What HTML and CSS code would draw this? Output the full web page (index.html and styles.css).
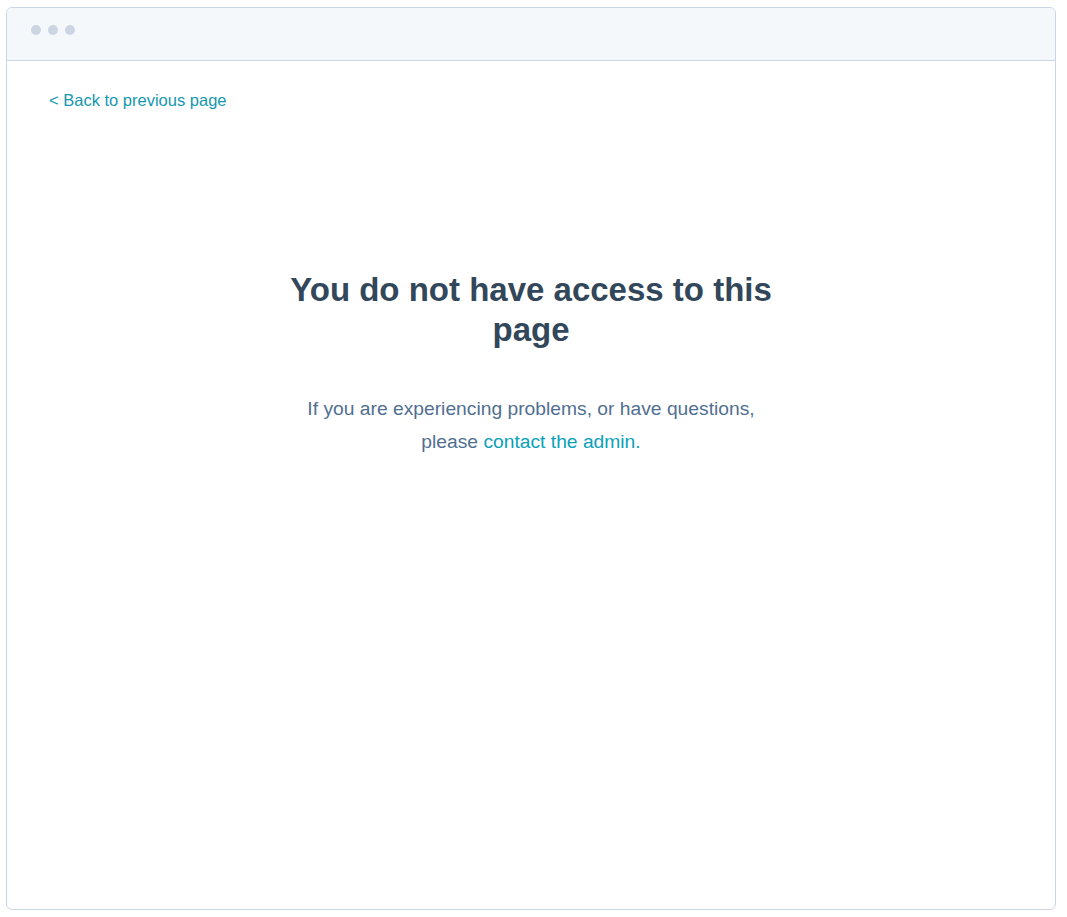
FILE: index.html
```html
<!DOCTYPE html>
<html lang="en">
<head>
<meta charset="utf-8">
<title>Access denied</title>
<link rel="stylesheet" href="styles.css">
</head>
<body>
<div class="frame">
  <div class="frame-bar">
    <span class="dot"></span><span class="dot"></span><span class="dot"></span>
  </div>
  <div class="frame-body">
    <a class="back-link" href="#">&lt; Back to previous page</a>
    <div class="message">
      <h1 class="title">You do not have access to this page</h1>
      <p class="text">If you are experiencing problems, or have questions, please <a class="admin-link" href="#">contact the admin.</a></p>
    </div>
  </div>
</div>
</body>
</html>
```
FILE: styles.css
```css
html, body {
  margin: 0;
  padding: 0;
  background: #ffffff;
}
body {
  padding: 7px 11px 7px 6px;
  font-family: "Liberation Sans", Arial, sans-serif;
}
.frame {
  height: 903px;
  box-sizing: border-box;
  border: 1px solid #cbd6e2;
  border-radius: 6px;
  overflow: hidden;
  display: flex;
  flex-direction: column;
}
.frame-bar {
  height: 53px;
  flex: none;
  box-sizing: border-box;
  background: #f5f8fa;
  border-bottom: 1px solid #cbd6e2;
  display: flex;
  align-items: center;
  gap: 7px;
  padding: 0 0 8px 24px;
}
.dot {
  width: 10px;
  height: 10px;
  border-radius: 50%;
  background: #cbd6e2;
}
.frame-body {
  flex: 1;
  padding: 29px 42px 0 42px;
  display: flex;
  flex-direction: column;
  align-items: flex-start;
}
.back-link {
  font-size: 16.5px;
  line-height: 20px;
  color: #1597b0;
  text-decoration: none;
}
.message {
  align-self: center;
  width: 492px;
  margin-top: 160px;
  text-align: center;
}
.title {
  margin: 0;
  font-size: 33px;
  line-height: 40px;
  font-weight: 700;
  color: #33475b;
}
.text {
  margin: 42px 0 0;
  font-size: 19.25px;
  line-height: 33px;
  color: #516f90;
}
.admin-link {
  color: #0aa1b9;
  text-decoration: none;
}
```
